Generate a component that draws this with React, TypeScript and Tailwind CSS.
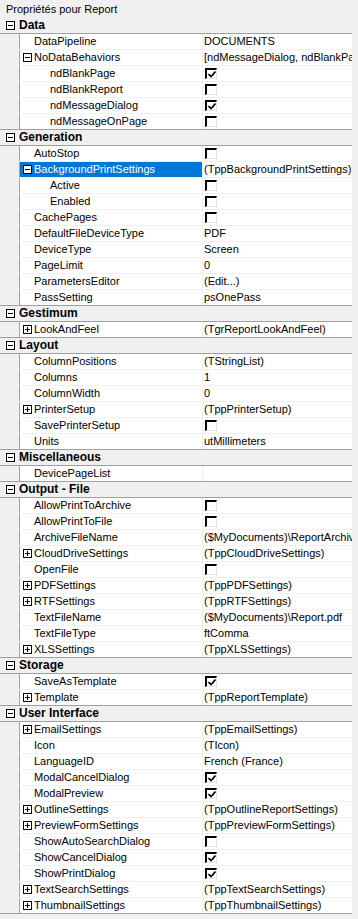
import React from 'react';

type Item = {
  name: string;
  value?: string;
  check?: boolean;
  box?: '+' | '-';
  sub?: boolean;
  selected?: boolean;
};

type Section = { title: string; items: Item[] };

const sections: Section[] = [
  {
    title: 'Data',
    items: [
      { name: 'DataPipeline', value: 'DOCUMENTS' },
      { name: 'NoDataBehaviors', value: '[ndMessageDialog, ndBlankPage]', box: '-' },
      { name: 'ndBlankPage', check: true, sub: true },
      { name: 'ndBlankReport', check: false, sub: true },
      { name: 'ndMessageDialog', check: true, sub: true },
      { name: 'ndMessageOnPage', check: false, sub: true },
    ],
  },
  {
    title: 'Generation',
    items: [
      { name: 'AutoStop', check: false },
      { name: 'BackgroundPrintSettings', value: '(TppBackgroundPrintSettings)', box: '-', selected: true },
      { name: 'Active', check: false, sub: true },
      { name: 'Enabled', check: false, sub: true },
      { name: 'CachePages', check: false },
      { name: 'DefaultFileDeviceType', value: 'PDF' },
      { name: 'DeviceType', value: 'Screen' },
      { name: 'PageLimit', value: '0' },
      { name: 'ParametersEditor', value: '(Edit...)' },
      { name: 'PassSetting', value: 'psOnePass' },
    ],
  },
  {
    title: 'Gestimum',
    items: [{ name: 'LookAndFeel', value: '(TgrReportLookAndFeel)', box: '+' }],
  },
  {
    title: 'Layout',
    items: [
      { name: 'ColumnPositions', value: '(TStringList)' },
      { name: 'Columns', value: '1' },
      { name: 'ColumnWidth', value: '0' },
      { name: 'PrinterSetup', value: '(TppPrinterSetup)', box: '+' },
      { name: 'SavePrinterSetup', check: false },
      { name: 'Units', value: 'utMillimeters' },
    ],
  },
  {
    title: 'Miscellaneous',
    items: [{ name: 'DevicePageList', value: '' }],
  },
  {
    title: 'Output - File',
    items: [
      { name: 'AllowPrintToArchive', check: false },
      { name: 'AllowPrintToFile', check: false },
      { name: 'ArchiveFileName', value: '($MyDocuments)\\ReportArchive.raf' },
      { name: 'CloudDriveSettings', value: '(TppCloudDriveSettings)', box: '+' },
      { name: 'OpenFile', check: false },
      { name: 'PDFSettings', value: '(TppPDFSettings)', box: '+' },
      { name: 'RTFSettings', value: '(TppRTFSettings)', box: '+' },
      { name: 'TextFileName', value: '($MyDocuments)\\Report.pdf' },
      { name: 'TextFileType', value: 'ftComma' },
      { name: 'XLSSettings', value: '(TppXLSSettings)', box: '+' },
    ],
  },
  {
    title: 'Storage',
    items: [
      { name: 'SaveAsTemplate', check: true },
      { name: 'Template', value: '(TppReportTemplate)', box: '+' },
    ],
  },
  {
    title: 'User Interface',
    items: [
      { name: 'EmailSettings', value: '(TppEmailSettings)', box: '+' },
      { name: 'Icon', value: '(TIcon)' },
      { name: 'LanguageID', value: 'French (France)' },
      { name: 'ModalCancelDialog', check: true },
      { name: 'ModalPreview', check: true },
      { name: 'OutlineSettings', value: '(TppOutlineReportSettings)', box: '+' },
      { name: 'PreviewFormSettings', value: '(TppPreviewFormSettings)', box: '+' },
      { name: 'ShowAutoSearchDialog', check: false },
      { name: 'ShowCancelDialog', check: true },
      { name: 'ShowPrintDialog', check: true },
      { name: 'TextSearchSettings', value: '(TppTextSearchSettings)', box: '+' },
      { name: 'ThumbnailSettings', value: '(TppThumbnailSettings)', box: '+' },
    ],
  },
];

const ExpandBox: React.FC<{ kind: '+' | '-' }> = ({ kind }) => (
  <svg width="9" height="9" viewBox="0 0 9 9" className="shrink-0">
    <rect x="0.5" y="0.5" width="8" height="8" fill="#fff" stroke="#000" />
    <line x1="2" y1="4.5" x2="7" y2="4.5" stroke="#000" />
    {kind === '+' && <line x1="4.5" y1="2" x2="4.5" y2="7" stroke="#000" />}
  </svg>
);

const CheckBox: React.FC<{ checked: boolean }> = ({ checked }) => (
  <div className="ml-[1px] w-[12px] h-[11px] border-l-2 border-t-2 border-black border-r border-b border-r-[#e3e3e3] border-b-[#e3e3e3] bg-white flex items-center justify-center">
    {checked && (
      <svg width="8" height="7" viewBox="0 0 8 7">
        <path d="M0.5 3 L3 5.5 L7.5 0.5" fill="none" stroke="#000" strokeWidth="1.6" />
      </svg>
    )}
  </div>
);

const PropRow: React.FC<{ item: Item; last: boolean }> = ({ item, last }) => (
  <div className={`flex h-4 border-b ${last ? 'border-[#a0a0a0]' : 'border-[#f0f0f0]'}`}>
    <div className="w-[19px] shrink-0" />
    <div
      className={`w-[184px] shrink-0 flex items-center border-l border-r border-l-[#a0a0a0] border-r-[#f0f0f0] ${
        item.selected ? 'bg-[#0078d7] text-white' : 'bg-white text-black'
      }`}
    >
      {item.box ? (
        <div className="flex items-center pl-[3px] gap-[2px]">
          <ExpandBox kind={item.box} />
          <span className="whitespace-nowrap">{item.name}</span>
        </div>
      ) : (
        <span className={`whitespace-nowrap ${item.sub ? 'pl-[30px]' : 'pl-[14px]'}`}>{item.name}</span>
      )}
    </div>
    <div className="flex-1 bg-white flex items-center pl-[1px] overflow-hidden">
      {item.check !== undefined ? (
        <CheckBox checked={item.check} />
      ) : (
        <span className="whitespace-nowrap">{item.value}</span>
      )}
    </div>
  </div>
);

export default function App() {
  return (
    <div
      className="w-[358px] h-[919px] bg-[#f0f0f0] text-[11px] leading-[15px] text-black overflow-hidden"
      style={{ fontFamily: '"Liberation Sans", Arial, sans-serif' }}
    >
      <div className="h-[18px] pl-[6px] pt-[1px] flex items-center">Propriétés pour Report</div>
      <div className="w-[352px]">
        {sections.map((s) => (
          <div key={s.title}>
            <div className="flex items-center h-4 border-b border-[#a0a0a0] pl-[6px] gap-[4px]">
              <ExpandBox kind="-" />
              <span className="font-bold text-[12px] whitespace-nowrap">{s.title}</span>
            </div>
            {s.items.map((it, i) => (
              <PropRow key={it.name} item={it} last={i === s.items.length - 1} />
            ))}
          </div>
        ))}
      </div>
    </div>
  );
}
